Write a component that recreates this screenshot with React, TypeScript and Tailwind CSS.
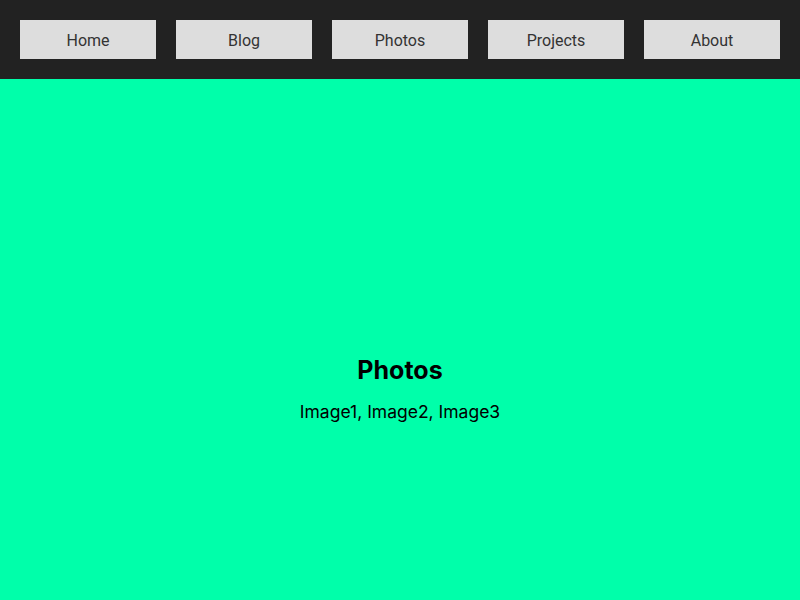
import React from 'react';

const links = ['Home', 'Blog', 'Photos', 'Projects', 'About'];

const App: React.FC = () => {
  return (
    <div className="flex h-screen flex-col bg-[#00ffaa] font-['Inter',sans-serif]">
      <nav className="flex gap-5 bg-[#222222] p-5">
        {links.map((link) => (
          <button
            key={link}
            className="h-[39px] flex-1 bg-[#dddddd] pt-0.5 font-['Roboto',sans-serif] text-base text-[#333333]"
          >
            {link}
          </button>
        ))}
      </nav>
      <main className="flex flex-1 flex-col items-center justify-center pt-[100px] text-black">
        <h2 className="mb-3 text-[25px] leading-8 font-bold">Photos</h2>
        <p className="text-[17.5px] leading-7">Image1, Image2, Image3</p>
      </main>
    </div>
  );
};

export default App;
